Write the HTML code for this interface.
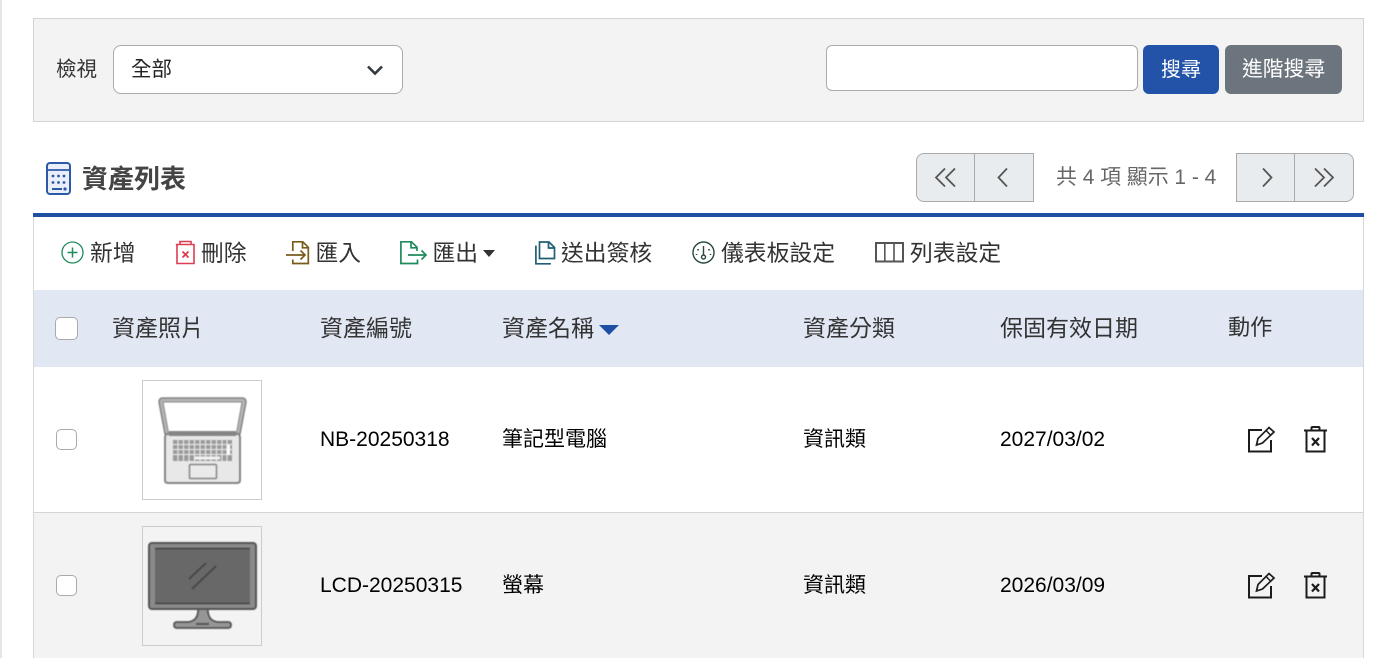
<!DOCTYPE html>
<html lang="zh-TW"><head><meta charset="utf-8"><title>資產列表</title>
<style>
html,body{margin:0;padding:0;background:#fff}
body{width:1400px;height:658px;position:relative;overflow:hidden;font-family:"Liberation Sans","Noto Sans CJK TC",sans-serif;color:#212529}
.a{position:absolute;box-sizing:border-box}
.t{position:absolute;white-space:nowrap;line-height:30px;height:30px}
svg{position:absolute;overflow:visible}
.cb{position:absolute;box-sizing:border-box;background:#fff;border:1px solid #aaa;border-radius:5px}
.nav{font-size:22.800px;color:#333}
.h{font-size:23px;color:#333}
.c{font-size:21px;color:#000}
.img{filter:blur(.45px)}
</style></head><body>
<div class="a" style="left:0;top:0;width:2px;height:658px;background:#e5e5e5"></div>
<div class="a" style="left:33px;top:18px;width:1331px;height:104px;background:#f3f3f3;border:1px solid #d4d4d4"></div>
<div class="t" style="left:56px;top:55px;font-size:20.500px;color:#333">檢視</div>
<div class="a" style="left:113px;top:45px;width:290px;height:49px;background:#fff;border:1px solid #aaa;border-radius:8px"></div>
<div class="t" style="left:131px;top:55px;font-size:20.500px;color:#222">全部</div>
<svg style="left:367px;top:65px" width="16" height="10" viewBox="0 0 16 10"><path d="M1 1.500 8 8.500l7-7" fill="none" stroke="#343a40" stroke-width="2.600"/></svg>
<div class="a" style="left:826px;top:45px;width:312px;height:46px;background:#fff;border:1px solid #aaa;border-radius:6px"></div>
<div class="a" style="left:1143px;top:45px;width:76px;height:49px;background:#2353a8;border-radius:6px"></div>
<div class="t" style="left:1161px;top:55px;font-size:20px;color:#fff">搜尋</div>
<div class="a" style="left:1225px;top:45px;width:117px;height:49px;background:#6c757d;border-radius:6px"></div>
<div class="t" style="left:1242px;top:55px;font-size:20.800px;color:#fff">進階搜尋</div>

<svg style="left:46px;top:162px" width="25" height="33" viewBox="0 0 25 33"><rect x="1" y="1" width="23" height="31" rx="3" fill="#e9eef8" stroke="#2d5aa8" stroke-width="2"/><path d="M1 8h23" stroke="#2d5aa8" stroke-width="1.800"/><path d="M6 27h10" stroke="#2d5aa8" stroke-width="2"/><g fill="#2d5aa8"><circle cx="7" cy="14" r="1.400"/><circle cx="12.500" cy="14" r="1.400"/><circle cx="18" cy="14" r="1.400"/><circle cx="7" cy="20.500" r="1.400"/><circle cx="12.500" cy="20.500" r="1.400"/><circle cx="18" cy="20.500" r="1.400"/><circle cx="19" cy="27" r="1.600"/></g></svg>
<div class="t" style="left:82px;top:164px;font-size:26px;font-weight:bold;color:#444">資產列表</div>

<div class="a" style="left:916px;top:153px;width:118px;height:49px;background:#e9ecef;border:1px solid #aaa;border-radius:8px 0 0 8px"></div>
<div class="a" style="left:974px;top:153px;width:1px;height:49px;background:#aaa"></div>
<div class="a" style="left:1236px;top:153px;width:118px;height:49px;background:#e9ecef;border:1px solid #aaa;border-radius:0 8px 8px 0"></div>
<div class="a" style="left:1294px;top:153px;width:1px;height:49px;background:#aaa"></div>
<svg style="left:916px;top:153px" width="438" height="49" viewBox="0 0 438 49" fill="none" stroke="#555" stroke-width="1.800"><path d="M29 15.500 20 24.500 29 33.500M39 15.500 30 24.500 39 33.500"/><path d="M91 15.500 82.500 24.500 91 33.500"/><path d="M347 15.500 355.500 24.500 347 33.500"/><path d="M399 15.500 408 24.500 399 33.500M408 15.500 417 24.500 408 33.500"/></svg>
<div class="t" style="left:1056px;top:163px;font-size:20.900px;color:#666">共 4 項 顯示 1 - 4</div>

<div class="a" style="left:33px;top:213px;width:1331px;height:4px;background:#1f4fa3"></div>
<div class="a" style="left:33px;top:217px;width:1331px;height:441px;border-left:1px solid #d8d8d8;border-right:1px solid #d8d8d8"></div>

<svg style="left:61px;top:241px" width="23" height="23" viewBox="0 0 23 23" fill="none" stroke="#1f8a5b" stroke-width="1.300"><circle cx="11.500" cy="11.500" r="10.500"/><path d="M11.500 6.500v10M6.500 11.500h10" stroke-width="1.500"/></svg>
<div class="t nav" style="left:90px;top:238px">新增</div>
<svg style="left:175px;top:240px" width="20" height="25" viewBox="0 0 20 25" fill="none" stroke="#dc3d52" stroke-width="1.600"><path d="M2 5v18.500h17V5M.8 4.500h19M5 4.500V1.500h11v3"/><path d="M7.500 11.500l6 6M13.500 11.500l-6 6" stroke-width="1.800"/></svg>
<div class="t nav" style="left:201px;top:238px">刪除</div>
<svg style="left:286px;top:240px" width="24" height="25" viewBox="0 0 24 25" fill="none" stroke="#7a5c1a" stroke-width="1.700"><path d="M6.800 11V1.800h10l5.500 5.500V23.500H6.800v-4"/><path d="M16.500 1.800v6h6"/><path d="M0 15h18.500M14.500 10.500 19 15l-4.500 4.500"/></svg>
<div class="t nav" style="left:315.500px;top:238px">匯入</div>
<svg style="left:400px;top:240px" width="27" height="25" viewBox="0 0 27 25" fill="none" stroke="#1f8a5b" stroke-width="1.700"><path d="M17 11V7.300l-5.500-5.500H.9v21.700H17.500v-4"/><path d="M11 1.800v6h6"/><path d="M8 15h17.500M21.500 10.500 26 15l-4.500 4.500"/></svg>
<div class="t nav" style="left:432.500px;top:238px">匯出</div>
<svg style="left:483px;top:250px" width="12" height="7" viewBox="0 0 12 7"><path d="M0 0h12L6 7z" fill="#333"/></svg>
<svg style="left:535px;top:241px" width="21" height="24" viewBox="0 0 21 24" fill="none" stroke="#1f6072" stroke-width="1.700"><path d="M4.500 1h9.500l5.500 5.500V17.500h-15z"/><path d="M13.500 1v6h6"/><path d="M.9 4.500V22.800h15"/></svg>
<div class="t nav" style="left:561px;top:238px">送出簽核</div>
<svg style="left:692px;top:241px" width="23" height="23" viewBox="0 0 23 23" fill="none" stroke="#24493e" stroke-width="1.400"><circle cx="11.500" cy="11.500" r="10.500"/><path d="M11.500 5v9"/><circle cx="11.500" cy="16" r="2"/><path d="M6 8v1.500M17 8v1.500M4.500 13v1M18.500 13v1" stroke-width="1.600"/></svg>
<div class="t nav" style="left:721px;top:238px">儀表板設定</div>
<svg style="left:875px;top:242px" width="29" height="20" viewBox="0 0 29 20" fill="none" stroke="#555" stroke-width="1.600"><rect x="1" y="1" width="27" height="18.500" stroke-width="2"/><path d="M9.800 1v18M19 1v18"/></svg>
<div class="t nav" style="left:910px;top:238px">列表設定</div>

<div class="a" style="left:34px;top:290px;width:1329px;height:77px;background:#e1e8f4"></div>
<div class="cb" style="left:55px;top:317px;width:23px;height:23px"></div>
<div class="t h" style="left:112px;top:313px">資產照片</div>
<div class="t h" style="left:320px;top:313px">資產編號</div>
<div class="t h" style="left:502px;top:313px">資產名稱</div>
<svg style="left:599px;top:325px" width="20" height="10" viewBox="0 0 20 10"><path d="M0 0h20L10 10z" fill="#1f4fa3"/></svg>
<div class="t h" style="left:803px;top:313px">資產分類</div>
<div class="t h" style="left:1000px;top:313px">保固有效日期</div>
<div class="t" style="left:1228px;top:313px;font-size:22.200px;color:#333">動作</div>

<div class="a" style="left:34px;top:512px;width:1329px;height:146px;background:#f3f3f3;border-top:1px solid #d4d4d4"></div>

<div class="cb" style="left:56px;top:429px;width:21px;height:21px"></div>
<div class="a" style="left:142px;top:380px;width:120px;height:120px;background:#fff;border:1px solid #ccc"></div>
<svg class="img" style="left:142px;top:380px" width="120" height="120" viewBox="0 0 120 120">
<path d="M21 18h79q4 0 4 4l-6 32H23L17 22q0-4 4-4z" fill="#b5b5b5" stroke="#858585" stroke-width="1.500"/>
<path d="M21 22h79l-5.500 31H26.500z" fill="#fff" stroke="#8a8a8a" stroke-width="1"/>
<path d="M24 54h73l1 3v43q0 3-3 3H26q-3 0-3-3V57z" fill="#e8e8e8" stroke="#858585" stroke-width="2"/>
<rect x="27" y="51" width="67" height="5" fill="#858585"/>
<rect x="31" y="60" width="59" height="21" fill="#999"/>
<path d="M31 64.500h59M31 69.500h59M31 74.500h59M36 60v21M41.500 60v21M47 60v21M52.500 60v21M58 60v21M63.500 60v21M69 60v21M74.500 60v21M80 60v21M85 60v21" stroke="#e4e4e4" stroke-width="1.300"/>
<rect x="52" y="76.500" width="26" height="3" fill="#f2f2f2"/><rect x="85" y="65" width="3" height="10" fill="#fff"/>
<rect x="47.500" y="84.500" width="27" height="14" rx="1" fill="#eaeaea" stroke="#858585" stroke-width="1.500"/>
</svg>
<div class="t c" style="left:320px;top:425px">NB-20250318</div>
<div class="t c" style="left:502px;top:425px">筆記型電腦</div>
<div class="t c" style="left:803px;top:425px">資訊類</div>
<div class="t c" style="left:1000px;top:425px">2027/03/02</div>

<div class="cb" style="left:56px;top:575px;width:21px;height:21px"></div>
<div class="a" style="left:142px;top:526px;width:120px;height:120px;background:#f3f3f3;border:1px solid #ccc"></div>
<svg class="img" style="left:142px;top:526px" width="120" height="120" viewBox="0 0 120 120">
<path d="M56 82q1 12-9 14H35q-3 0-3 3t3 3h51q3 0 3-3t-3-3H75q-10-2-9-14z" fill="#969696" stroke="#555" stroke-width="1.800"/>
<rect x="54" y="97" width="13" height="2" fill="#555"/>
<rect x="7" y="17" width="107" height="66" rx="3" fill="#8a8a8a" stroke="#555" stroke-width="2"/>
<rect x="13" y="22" width="95" height="56" fill="#686868"/>
<path d="M13 22.500h95M13 77.500h95" stroke="#444" stroke-width="1.600"/>
<path d="M47 53 64 37M50 63 74 40" stroke="#454545" stroke-width="1.800" fill="none"/>
</svg>
<div class="t c" style="left:320px;top:571px">LCD-20250315</div>
<div class="t c" style="left:502px;top:571px">螢幕</div>
<div class="t c" style="left:803px;top:571px">資訊類</div>
<div class="t c" style="left:1000px;top:571px">2026/03/09</div>

<svg style="left:1248px;top:426px" width="27" height="27" viewBox="0 0 27 27" fill="none" stroke="#1c1c1c" stroke-width="2"><path d="M14 4H1v21.500h22V14"/><path d="M8.500 19l1.500-6.500L21 1.500l5 4.500L14.500 17z" stroke-width="1.700"/><path d="M18 4.500l4.500 4.500" stroke-width="1.500"/></svg>
<svg style="left:1304px;top:426px" width="23" height="27" viewBox="0 0 23 27" fill="none" stroke="#1c1c1c" stroke-width="2"><path d="M2.500 5v20.500h18V5M0 4.500h23M7.500 4.500V1.800q0-.8 1-.8h6q1 0 1 .8v2.700"/><path d="M8 12l7 7.500M15 12l-7 7.500" stroke-width="2.200"/></svg>
<svg style="left:1248px;top:572px" width="27" height="27" viewBox="0 0 27 27" fill="none" stroke="#1c1c1c" stroke-width="2"><path d="M14 4H1v21.500h22V14"/><path d="M8.500 19l1.500-6.500L21 1.500l5 4.500L14.500 17z" stroke-width="1.700"/><path d="M18 4.500l4.500 4.500" stroke-width="1.500"/></svg>
<svg style="left:1304px;top:572px" width="23" height="27" viewBox="0 0 23 27" fill="none" stroke="#1c1c1c" stroke-width="2"><path d="M2.500 5v20.500h18V5M0 4.500h23M7.500 4.500V1.800q0-.8 1-.8h6q1 0 1 .8v2.700"/><path d="M8 12l7 7.500M15 12l-7 7.500" stroke-width="2.200"/></svg>
</body></html>
